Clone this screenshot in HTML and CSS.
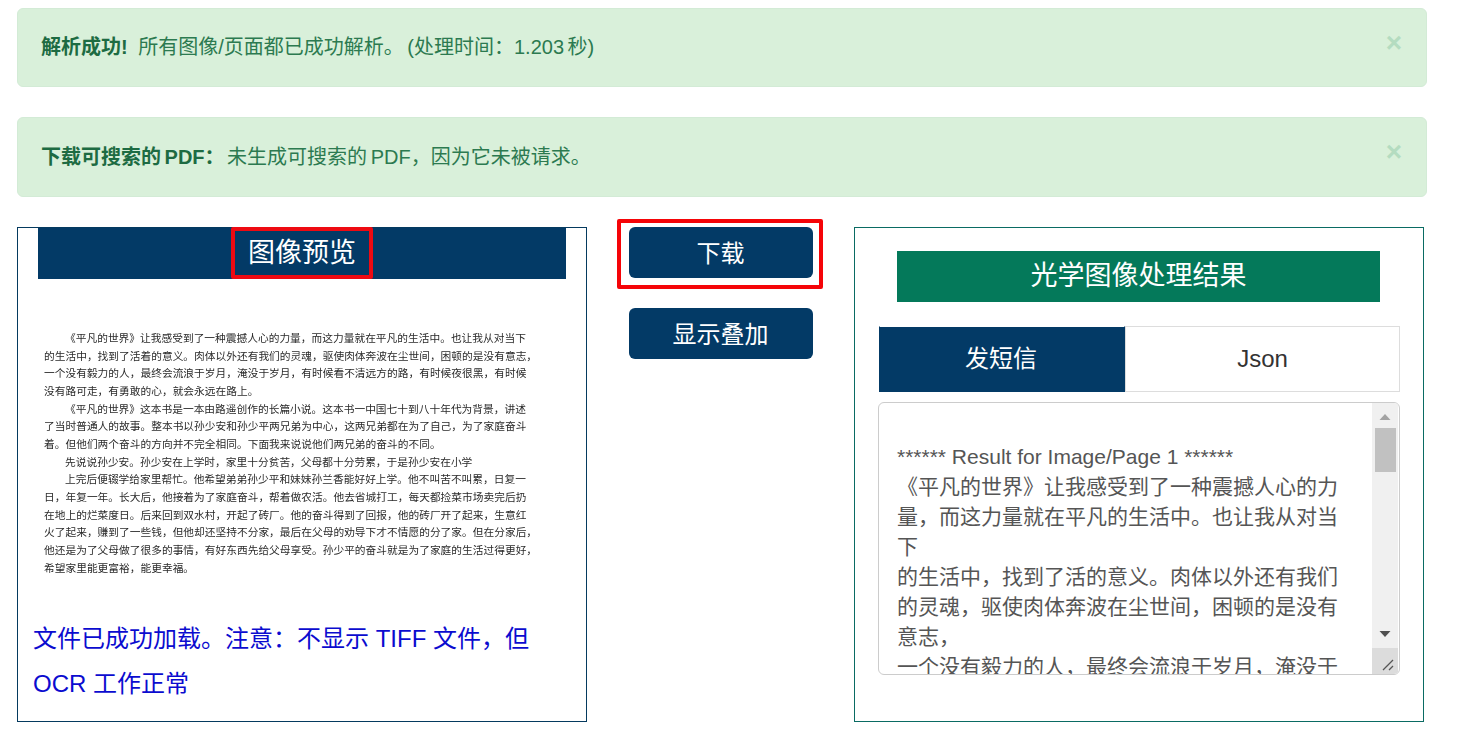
FILE: index.html
```html
<!DOCTYPE html>
<html lang="zh-CN">
<head>
<meta charset="utf-8">
<title>光学图像处理结果</title>
<link rel="stylesheet" href="styles.css">
</head>
<body>
<div class="alert alert-first">
  <p class="alert-text"><strong>解析成功!</strong> 所有图像/页面都已成功解析。 (处理时间：1.203 秒)</p>
  <span class="close">×</span>
</div>
<div class="alert alert-second">
  <p class="alert-text"><strong>下载可搜索的 PDF：</strong> 未生成可搜索的 PDF，因为它未被请求。</p>
  <span class="close">×</span>
</div>
<main class="row">
  <section class="panel panel-left">
    <h2 class="panel-title"><span class="marked">图像预览</span></h2>
    <div class="doc">
      <div class="doc-line indent">《平凡的世界》让我感受到了一种震撼人心的力量，而这力量就在平凡的生活中。也让我从对当下</div>
      <div class="doc-line">的生活中，找到了活着的意义。肉体以外还有我们的灵魂，驱使肉体奔波在尘世间，困顿的是没有意志，</div>
      <div class="doc-line">一个没有毅力的人，最终会流浪于岁月，淹没于岁月，有时候看不清远方的路，有时候夜很黑，有时候</div>
      <div class="doc-line">没有路可走，有勇敢的心，就会永远在路上。</div>
      <div class="doc-line indent">《平凡的世界》这本书是一本由路遥创作的长篇小说。这本书一中国七十到八十年代为背景，讲述</div>
      <div class="doc-line">了当时普通人的故事。整本书以孙少安和孙少平两兄弟为中心，这两兄弟都在为了自己，为了家庭奋斗</div>
      <div class="doc-line">着。但他们两个奋斗的方向并不完全相同。下面我来说说他们两兄弟的奋斗的不同。</div>
      <div class="doc-line indent">先说说孙少安。孙少安在上学时，家里十分贫苦，父母都十分劳累，于是孙少安在小学</div>
      <div class="doc-line indent">上完后便辍学给家里帮忙。他希望弟弟孙少平和妹妹孙兰香能好好上学。他不叫苦不叫累，日复一</div>
      <div class="doc-line">日，年复一年。长大后，他接着为了家庭奋斗，帮着做农活。他去省城打工，每天都捡菜市场卖完后扔</div>
      <div class="doc-line">在地上的烂菜度日。后来回到双水村，开起了砖厂。他的奋斗得到了回报，他的砖厂开了起来，生意红</div>
      <div class="doc-line">火了起来，赚到了一些钱，但他却还坚持不分家，最后在父母的劝导下才不情愿的分了家。但在分家后，</div>
      <div class="doc-line">他还是为了父母做了很多的事情，有好东西先给父母享受。孙少平的奋斗就是为了家庭的生活过得更好，</div>
      <div class="doc-line">希望家里能更富裕，能更幸福。</div>
    </div>
    <p class="notice">文件已成功加载。注意：不显示 TIFF 文件，但 OCR 工作正常</p>
  </section>

  <div class="actions">
    <button class="btn marked-btn" type="button">下载</button>
    <button class="btn" type="button">显示叠加</button>
  </div>

  <section class="panel panel-right">
    <h2 class="result-title">光学图像处理结果</h2>
    <div class="tabs">
      <div class="tab tab-active">发短信</div>
      <div class="tab">Json</div>
    </div>
    <div class="output">
      <div class="output-text">
        <div class="blank">&nbsp;</div>
        <div>****** Result for Image/Page 1 ******</div>
        <div>《平凡的世界》让我感受到了一种震撼人心的力量，而这力量就在平凡的生活中。也让我从对当下</div>
        <div>的生活中，找到了活的意义。肉体以外还有我们的灵魂，驱使肉体奔波在尘世间，困顿的是没有意志，</div>
        <div>一个没有毅力的人，最终会流浪于岁月，淹没于</div>
      </div>
      <div class="scrollbar">
        <svg class="arrow arrow-up" width="12" height="8" viewBox="0 0 12 8"><path d="M6 1 L11.500 7 H0.500 Z"/></svg>
        <div class="thumb"></div>
        <svg class="arrow arrow-down" width="12" height="8" viewBox="0 0 12 8"><path d="M0.500 1 H11.500 L6 7 Z"/></svg>
        <div class="corner">
          <svg width="14" height="14" viewBox="0 0 14 14"><path d="M2 12 L12 2 M8 12 L12 8" stroke="#555" stroke-width="1.300" fill="none"/></svg>
        </div>
      </div>
    </div>
  </section>
</main>
</body>
</html>
```

FILE: styles.css
```css
*, *::before, *::after { box-sizing: border-box; }

html, body { height: 100%; }

body {
  margin: 0;
  padding: 8px 30px 0 17px;
  background: #fff;
  overflow: hidden;
  font-family: "Liberation Sans", "Noto Sans CJK SC", sans-serif;
  color: #333;
}

.alert {
  display: flex;
  justify-content: space-between;
  align-items: flex-start;
  width: 1410px;
  margin-bottom: 30px;
  padding: 0 24px 0 23px;
  background: #d9f0da;
  border: 1px solid #d3ebd6;
  border-radius: 6px;
  color: #2c7a50;
  font-size: 20px;
}
.alert-first { height: 79px; }
.alert-second { height: 80px; }

.alert-text {
  margin: 0;
  line-height: 28px;
  padding-top: 24px;
  word-spacing: -2px;
}
.alert-second .alert-text { padding-top: 25px; }
.alert-text strong { color: #1d6b42; font-weight: 700; }
.alert-first strong { margin-right: 7px; }
.alert-second strong { margin-right: -1px; }

.close {
  font-size: 28px;
  font-weight: 700;
  line-height: 32px;
  padding-top: 18px;
  height: 50px;
  color: #b4dcc0;
}

.row {
  display: flex;
  align-items: flex-start;
  gap: 42px;
}

.panel {
  width: 570px;
  height: 495px;
  background: #fff;
  border: 1px solid #053a5f;
}
.panel-left { padding: 0 20px; }
.panel-right { border-color: #0a6b63; padding: 23px 23px 0 23px; margin-left: -1px; }

.panel-title {
  display: flex;
  justify-content: center;
  margin: 0;
  height: 51px;
  background: #033a66;
  color: #fff;
  font-size: 27px;
  font-weight: 400;
  line-height: 50px;
}

.marked {
  position: relative;
  padding: 0 17px;
}
.marked::after {
  content: "";
  position: absolute;
  inset: -1px 0 0 0;
  border: 4px solid #ee0a12;
  border-radius: 2px;
}

.doc {
  margin: 51px 0 0 6px;
  width: 500px;
  font-size: 10.72px;
  line-height: 17.65px;
  color: #2a2a2a;
  white-space: nowrap;
  filter: blur(0.4px);
}
.doc-line.indent { padding-left: 21px; }

.notice {
  margin: 39px 0 0 -5px;
  width: 510px;
  font-size: 24px;
  line-height: 45px;
  color: #0b0bcf;
}

.actions {
  display: flex;
  flex-direction: column;
  gap: 30px;
  width: 184px;
}

.btn {
  height: 51px;
  border: 0;
  border-radius: 6px;
  background: #033a66;
  color: #fff;
  font-family: inherit;
  font-size: 24px;
  padding: 0 1px 2px 0;
}

.marked-btn { position: relative; }
.marked-btn::after {
  content: "";
  position: absolute;
  left: -12px;
  top: -8px;
  width: 206px;
  height: 70px;
  border: 4px solid #f50408;
  border-radius: 2px;
}

.result-title {
  margin: 0 20px 24px 19px;
  width: 483px;
  height: 51px;
  background: #04795a;
  color: #fff;
  font-size: 27px;
  font-weight: 400;
  line-height: 50px;
  text-align: center;
}

.tabs {
  display: flex;
  width: 521px;
  height: 66px;
  margin-left: 1px;
  margin-bottom: 10px;
}
.tab {
  font-size: 24px;
  line-height: 64px;
  text-align: center;
  border: 1px solid #ddd;
  color: #333;
  flex: 1;
}
.tab-active {
  flex: 0 0 246px;
  padding-right: 2px;
  background: #033a66;
  border-color: #033a66;
  border-top-color: #fff;
  color: #fff;
}

.output {
  display: flex;
  justify-content: space-between;
  width: 522px;
  height: 273px;
  border: 1px solid #ccc;
  border-radius: 6px;
  overflow: hidden;
}

.output-text {
  width: 450px;
  margin-left: 18px;
  padding-top: 9px;
  font-size: 21px;
  line-height: 30px;
  color: #555;
}

.scrollbar {
  position: relative;
  flex: 0 0 26px;
  margin-right: 1px;
  display: flex;
  flex-direction: column;
  align-items: center;
  background: #f0f0f0;
}
.arrow { fill: #a3a3a3; margin-top: 10px; flex: none; }
.arrow-down { fill: #505050; margin-top: 158px; }
.thumb {
  width: 21px;
  height: 44px;
  margin-top: 7px;
  background: #c1c1c1;
  flex: none;
}
.corner {
  margin-top: auto;
  width: 100%;
  height: 26px;
  background: #dcdcdc;
  display: flex;
  align-items: flex-end;
  justify-content: flex-end;
  padding: 0 3px 2px 0;
}
```
